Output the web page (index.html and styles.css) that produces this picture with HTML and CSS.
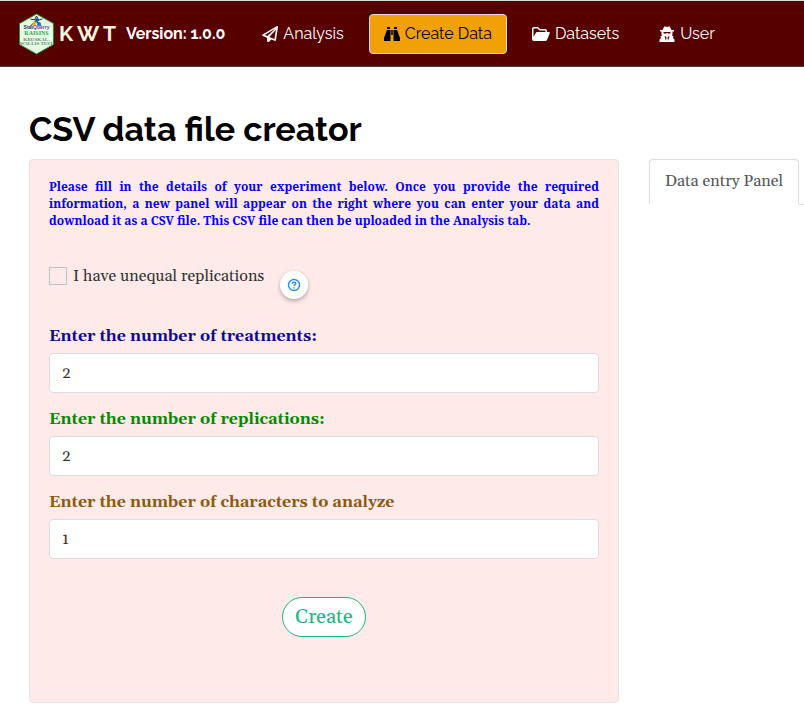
FILE: index.html
```html
<!DOCTYPE html>
<html lang="en">
<head>
<meta charset="utf-8">
<meta name="viewport" content="width=device-width, initial-scale=1">
<title>KWT - Create Data</title>
<link rel="stylesheet" href="styles.css">
</head>
<body>
<header class="navbar">
  <div class="brand">
    <svg class="logo" viewBox="0 0 36 42" aria-hidden="true">
      <path d="M18 1 35 10.500v21L18 41 1 31.500v-21z" fill="#e4fde3" stroke="#2b8a3c" stroke-width="1"/>
      <path d="M12 6l4 1 2-4 2 4 4-1" fill="none" stroke="#333" stroke-width="1"/>
      <path d="M12 13l5-5 6 5" fill="none" stroke="#222" stroke-width="1"/>
      <circle cx="18.500" cy="7" r="2" fill="#155cb0"/>
      <circle cx="16" cy="10.500" r="2" fill="#f0b323"/>
      <circle cx="20.500" cy="11" r="2" fill="#1976c5"/>
      <text x="18" y="16" class="logo-name" text-anchor="middle"><tspan fill="#1d2f75">Stat</tspan><tspan fill="#8c3a9b">Qberry</tspan></text>
      <text x="18" y="22" class="logo-line" text-anchor="middle" fill="#38a05a">RAISINS</text>
      <text x="18" y="28" class="logo-small" text-anchor="middle" fill="#6c8574">KRUSKAL-</text>
      <text x="18" y="32" class="logo-small" text-anchor="middle" fill="#6c8574">WALLIS TEST</text>
    </svg>
    <span class="name">K W T</span>
    <span class="version">Version: 1.0.0</span>
  </div>
  <nav class="links" aria-label="Main">
    <a class="link" href="#analysis">
      <svg class="icon" viewBox="0 0 16 16" aria-hidden="true"><path fill-rule="evenodd" d="M15 0q1 0 1 1l-2 13q-.3 1.200-1.400.8L9.300 13.500 7 15.700Q5.500 16.500 5 15v-3.300L.8 10Q-.4 9.300.6 8.400zM13.800 2.300 2.800 8.900l2.600 1.100zM14 3.800 7.300 11l5.100 2.100z"/></svg>
      <span>Analysis</span>
    </a>
    <a class="link active" href="#create" aria-current="page">
      <svg class="icon" viewBox="0 0 16 16" aria-hidden="true"><path d="M3 1h3v2H3zM10 1h3v2h-3zM3 4h3.500v5H6.500v6H0v-3L2.500 5zM9.500 4H13l.5 1L16 12v3H9.500V9zM7.200 4h1.600v5H7.200z"/></svg>
      <span>Create Data</span>
    </a>
    <a class="link" href="#datasets">
      <svg class="icon wide" viewBox="0 0 18 16" aria-hidden="true"><path d="M0 13V3q0-2 2-2h4l2 2h5q2 0 2 2v1h-1.500V4.500H7.500L5.500 2.500H1.500V11L4 6.500Q4.500 6 5 6h12q1 0 .8 1L15 14q-.5 1-1.500 1H2q-2 0-2-2z"/></svg>
      <span>Datasets</span>
    </a>
    <a class="link" href="#user">
      <svg class="icon" viewBox="0 0 16 16" aria-hidden="true"><path fill-rule="evenodd" d="M3.500 4 5 1q.5-1 1.500-.5L8 1l1.500-.5Q10.500 0 11 1l1.500 3H15v1.500h-1.500V8q0 1-.5 2h1.500l-.5 2 1.500 1.500V16H.5v-2.500L2 12l-.5-2H3q-.5-1-.5-2V5.500H1V4zM4.500 6v1.200l2.500.5.5-.7h1l.5.700 2.500-.5V6zM5.500 10 7 15l.5-4zM10.500 10 9 15l-.5-4z"/></svg>
      <span>User</span>
    </a>
  </nav>
</header>
<main class="page">
  <h1>CSV data file creator</h1>
  <div class="layout">
    <form class="well">
      <p class="intro">Please fill in the details of your experiment below. Once you provide the required information, a new panel will appear on the right where you can enter your data and download it as a CSV file. This CSV file can then be uploaded in the Analysis tab.</p>
      <div class="option">
        <label class="check"><input type="checkbox"><span>I have unequal replications</span></label>
        <button class="help" type="button" aria-label="Help">
          <svg viewBox="0 0 14 14" aria-hidden="true"><circle cx="7" cy="7" r="5.500"/><path d="M5.300 5.700C5.300 3.700 8.700 3.700 8.700 5.600 8.700 6.900 7 6.800 7 8M7 9.200v1.200"/></svg>
        </button>
      </div>
      <div class="field">
        <label class="treatments" for="treatments">Enter the number of treatments:</label>
        <input id="treatments" type="text" inputmode="numeric" value="2">
      </div>
      <div class="field">
        <label class="replications" for="replications">Enter the number of replications:</label>
        <input id="replications" type="text" inputmode="numeric" value="2">
      </div>
      <div class="field">
        <label class="characters" for="characters">Enter the number of characters to analyze</label>
        <input id="characters" type="text" inputmode="numeric" value="1">
      </div>
      <button class="create" type="button">Create</button>
    </form>
    <section class="tabs">
      <a class="tab" href="#panel">Data entry Panel</a>
    </section>
  </div>
</main>
</body>
</html>
```
FILE: styles.css
```css
* { box-sizing: border-box; }

body {
  margin: 0;
  background: #fff;
  color: #333;
  font-family: Georgia, Gelasio, "Liberation Serif", serif;
  font-size: 16px;
}

.navbar {
  display: flex;
  align-items: center;
  gap: 22px;
  height: 67px;
  padding: 0 18px;
  border-top: 1px solid #ddd;
  border-bottom: 1px solid #444;
  background: #560000;
  color: #fff;
  font-family: Raleway, Lato, sans-serif;
  white-space: nowrap;
}

.brand { display: flex; align-items: center; gap: 4px; }
.logo { width: 37px; height: 42px; }
.logo-name { font: bold 5px "Liberation Sans", sans-serif; }
.logo-line { font: bold 6px "Liberation Serif", serif; }
.logo-small { font: bold 5px "Liberation Serif", serif; }
.name { color: #f5f5dc; font-size: 21px; font-weight: bold; }
.version { margin-left: 6px; font-size: 16px; font-weight: bold; }

.links { display: flex; gap: 10px; }

.link {
  display: flex;
  align-items: center;
  gap: 5px;
  height: 40px;
  padding: 0 14px;
  border: 1px solid transparent;
  border-radius: 4px;
  color: inherit;
  text-decoration: none;
}

.link.active { background: #f2a007; border-color: #ddd; color: #000; }
.icon { width: 16px; height: 16px; fill: currentColor; }
.icon.wide { width: 18px; }

.page { padding-left: 29px; }

h1 {
  margin: 42px 0 10px;
  color: #000;
  font-family: Raleway, Lato, sans-serif;
  font-size: 34px;
  line-height: 40px;
}

.layout {
  display: grid;
  grid-template-columns: minmax(0, 118fr) minmax(0, 31fr);
  gap: 30px;
}

.well {
  padding: 18px 19px 65px;
  border: 1px solid #e3e3e3;
  border-radius: 4px;
  background: #ffeaea;
}

.intro {
  margin: 0;
  color: #00f;
  font-family: "Droid Serif", "Noto Serif", "Liberation Serif", serif;
  font-size: 12px;
  font-weight: bold;
  line-height: 17px;
  text-align: justify;
}

.option { display: flex; gap: 16px; margin-top: 35px; }

.check { display: flex; align-items: center; gap: 6px; height: 24px; }

.check input {
  appearance: none;
  width: 18px;
  height: 18px;
  margin: 0;
  border: 1px solid #bdc3c7;
}

.help {
  display: grid;
  place-items: center;
  width: 28px;
  height: 28px;
  margin-top: 7px;
  padding: 0;
  border: 0;
  border-radius: 50%;
  background: #fff;
  box-shadow: 0 2px 4px rgba(0, 0, 0, 0.3);
}

.help svg {
  width: 14px;
  height: 14px;
  fill: none;
  stroke: #2490ee;
  stroke-width: 1.4;
}

.option + .field { margin-top: 26px; }
.field { margin-bottom: 15px; }

.field label {
  display: block;
  margin-bottom: 5px;
  font-weight: bold;
  line-height: 23px;
}

.treatments { color: #0c0c8b; }
.replications { color: #008b00; }
.characters { color: #8b5a0b; }

.field input {
  display: block;
  width: 100%;
  height: 40px;
  padding: 8px 12px;
  border: 1px solid #ddd;
  border-radius: 4px;
  background: #fff;
  color: #333;
  font: inherit;
}

.create {
  display: block;
  height: 40px;
  margin: 38px auto 0;
  padding: 0 12px;
  border: 1px solid #20b584;
  border-radius: 20px;
  background: #fff;
  color: #20b584;
  font: inherit;
  font-size: 20px;
}

.tabs { display: flex; align-items: flex-start; }

.tab {
  height: 45px;
  padding: 0 15px;
  border: 1px solid #ddd;
  border-bottom: 0;
  border-radius: 4px 4px 0 0;
  color: #555;
  line-height: 42px;
  text-decoration: none;
  white-space: nowrap;
}

.tabs::after {
  flex: 1;
  height: 45px;
  border-bottom: 1px solid #ddd;
  content: "";
}
```
